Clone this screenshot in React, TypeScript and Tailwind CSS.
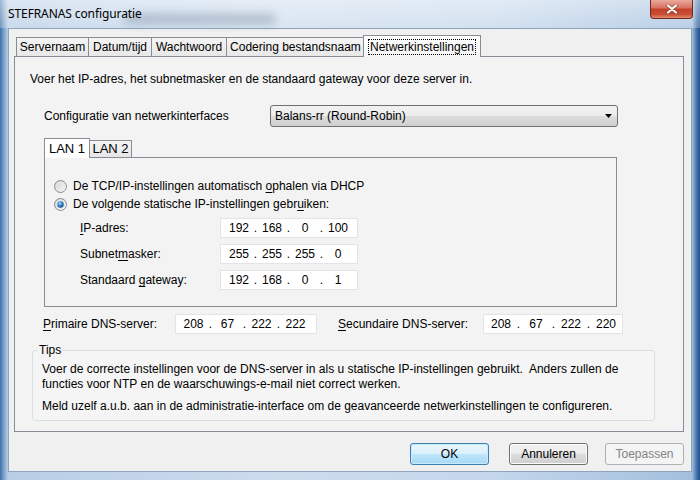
import React from 'react';

const U = ({ children }: { children: React.ReactNode }) => (
  <span className="underline underline-offset-[2px] decoration-[1px]">{children}</span>
);

function Radio({ checked }: { checked?: boolean }) {
  return (
    <svg width="13" height="13" viewBox="0 0 13 13" className="shrink-0">
      <defs>
        <linearGradient id="rbg" x1="0" y1="0" x2="1" y2="1">
          <stop offset="0" stopColor="#cfcfcf" />
          <stop offset="1" stopColor="#fbfbfb" />
        </linearGradient>
        <radialGradient id="rdot" cx="0.4" cy="0.35" r="0.75">
          <stop offset="0" stopColor="#b9e3fb" />
          <stop offset="0.45" stopColor="#3586cf" />
          <stop offset="1" stopColor="#0d3d78" />
        </radialGradient>
      </defs>
      <circle cx="6.5" cy="6.5" r="6" fill="url(#rbg)" stroke="#8d8d8d" />
      <circle cx="6.5" cy="6.5" r="4.2" fill="none" stroke="#e9e9e9" strokeWidth="1" />
      {checked && <circle cx="6.5" cy="6.5" r="3.2" fill="url(#rdot)" />}
    </svg>
  );
}

function IpBox({ parts, className, seg }: { parts: string[]; className: string; seg: string }) {
  return (
    <div className={`h-[20px] bg-white border border-[#e3e4e8] flex items-center ${className}`}>
      {parts.map((p, i) => (
        <React.Fragment key={i}>
          {i > 0 && <span className="w-[5px] text-center">.</span>}
          <span className={`${seg} text-center`}>{p}</span>
        </React.Fragment>
      ))}
    </div>
  );
}

const tabs = [
  { label: 'Servernaam', w: 'w-[73px]' },
  { label: 'Datum/tijd', w: 'w-[63px]' },
  { label: 'Wachtwoord', w: 'w-[75px]' },
  { label: 'Codering bestandsnaam', w: 'w-[138px]' },
];

export default function App() {
  return (
    <div className="w-[700px] h-[480px] overflow-hidden relative flex flex-col bg-[linear-gradient(90deg,#3f6fa6_0px,#6e97c4_3px,#b8cee6_8px,#cddced_40%,#c4d7eb_70%,#a3bfde_calc(100%_-_8px),#3c6da6_calc(100%_-_3px),#24508a_100%)] font-['Liberation_Sans',Arial,sans-serif] text-[12px] text-black">
      {/* title bar */}
      <div className="h-[28px] shrink-0 relative flex items-center pl-[8px] bg-[linear-gradient(180deg,rgba(255,255,255,0.5),rgba(255,255,255,0.25))]">
        <div className="absolute left-[125px] top-[14px] w-[150px] h-[10px] bg-[#6d7f94] opacity-40 blur-[5px]" />
        <span className="relative font-['Noto_Sans',sans-serif] text-[12px] leading-none tracking-[-0.1px] text-black">
          STEFRANAS configuratie
        </span>
        <div className="absolute right-[7px] top-0 w-[43px] h-[19px] rounded-b-[4px] border border-t-0 border-[#6e2b20] bg-[linear-gradient(180deg,#eaa99b,#d6705f_45%,#c2402b_50%,#c84e36_80%,#e28c6b)] flex items-center justify-center">
          <svg width="12" height="10" viewBox="0 0 12 10">
            <path d="M2 1.5 L10 8.5 M10 1.5 L2 8.5" stroke="#5a2018" strokeWidth="3.4" strokeLinecap="round" opacity="0.55" />
            <path d="M2 1.5 L10 8.5 M10 1.5 L2 8.5" stroke="#ffffff" strokeWidth="2.2" strokeLinecap="round" />
          </svg>
        </div>
      </div>

      {/* client area */}
      <div className="ml-[8px] mr-[8px] h-[444px] shrink-0 border border-[#8ea4bc] bg-[#f0f0f0] pl-[5px] pr-[7px] pt-[6px] flex flex-col">
        {/* tab strip */}
        <div className="h-[21px] flex items-end pl-[2px]">
          {tabs.map((t, i) => (
            <div
              key={t.label}
              className={`${t.w} h-[19px] border-t border-r border-[#898c95] ${i === 0 ? 'border-l' : ''} bg-[linear-gradient(180deg,#f4f4f4,#e8e8e8)] flex items-center justify-center`}
            >
              {t.label}
            </div>
          ))}
          <div className="w-[118px] h-[22px] -ml-[2px] mb-[-1px] relative z-10 border border-b-0 border-[#898c95] bg-[linear-gradient(180deg,#ffffff,#f5f5f5)] flex items-center justify-center">
            <span className="border border-dotted border-black px-[1px] leading-[14px]">Netwerkinstellingen</span>
          </div>
        </div>

        {/* tab panel */}
        <div className="h-[376px] border border-[#898c95] bg-[#f3f3f3] pl-[15px] pt-[15px] flex flex-col">
          <p className="leading-[15px]">
            Voer het IP-adres, het subnetmasker en de standaard gateway voor deze server in.
          </p>

          <div className="mt-[18px] ml-[14px] h-[22px] flex items-center">
            <span className="w-[226px]">Configuratie van netwerkinterfaces</span>
            <div className="w-[348px] h-[22px] rounded-[3px] border border-[#707070] bg-[linear-gradient(180deg,#f2f2f2,#ebebeb_50%,#dddddd_51%,#cfcfcf)] flex items-center pl-[4px] pr-[5px]">
              <span className="flex-1">Balans-rr (Round-Robin)</span>
              <svg width="7" height="4" viewBox="0 0 7 4">
                <polygon points="0,0 7,0 3.5,4" fill="#000" />
              </svg>
            </div>
          </div>

          {/* LAN tabs */}
          <div className="mt-[11px] ml-[14px] w-[573px] flex flex-col">
            <div className="h-[19px] flex items-end">
              <div className="w-[46px] h-[20px] mb-[-1px] relative z-10 border border-b-0 border-[#898c95] bg-white flex items-center justify-center text-[13px]">
                LAN 1
              </div>
              <div className="w-[42px] h-[17px] border-t border-r border-[#898c95] bg-[linear-gradient(180deg,#f4f4f4,#e6e6e6)] flex items-center justify-center text-[13px]">
                LAN 2
              </div>
            </div>
            <div className="h-[150px] border border-[#898c95] pl-[9px] pt-[20px] flex flex-col">
              <div className="h-[16px] flex items-center gap-[6px]">
                <Radio />
                <span>
                  De TCP/IP-instellingen automatisch <U>o</U>phalen via DHCP
                </span>
              </div>
              <div className="mt-[2px] h-[16px] flex items-center gap-[6px]">
                <Radio checked />
                <span>
                  De volgende statische IP-instellingen gebr<U>u</U>iken:
                </span>
              </div>
              <div className="mt-[6px] ml-[26px] flex items-center">
                <span className="w-[140px]">
                  <U>I</U>P-adres:
                </span>
                <IpBox parts={['192', '168', '0', '100']} className="w-[138px] pl-[4px]" seg="w-[28px]" />
              </div>
              <div className="mt-[6px] ml-[26px] flex items-center">
                <span className="w-[140px]">
                  Subnet<U>m</U>asker:
                </span>
                <IpBox parts={['255', '255', '255', '0']} className="w-[138px] pl-[4px]" seg="w-[28px]" />
              </div>
              <div className="mt-[6px] ml-[26px] flex items-center">
                <span className="w-[140px]">
                  Standaard <U>g</U>ateway:
                </span>
                <IpBox parts={['192', '168', '0', '1']} className="w-[138px] pl-[4px]" seg="w-[28px]" />
              </div>
            </div>
          </div>

          {/* DNS */}
          <div className="mt-[7px] ml-[13px] h-[20px] flex items-center">
            <span className="w-[132px]">
              <U>P</U>rimaire DNS-server:
            </span>
            <IpBox parts={['208', '67', '222', '222']} className="w-[142px] pl-[3px]" seg="w-[29px]" />
            <span className="ml-[21px] w-[145px]">
              <U>S</U>ecundaire DNS-server:
            </span>
            <IpBox parts={['208', '67', '222', '220']} className="w-[140px] pl-[2px]" seg="w-[30px]" />
          </div>

          {/* Tips */}
          <div className="mt-[16px] ml-[2px] w-[623px] h-[71px] relative border border-[#d5dfe5] rounded-[3px] bg-[#f5f5f5] pl-[9px] pt-[11px]">
            <span className="absolute left-[4px] top-[-8px] px-[2px] bg-[#f3f3f3] leading-[15px]">Tips</span>
            <p className="leading-[15px]">
              Voer de correcte instellingen voor de DNS-server in als u statische IP-instellingen gebruikt.&nbsp; Anders zullen de
              <br />
              functies voor NTP en de waarschuwings-e-mail niet correct werken.
            </p>
            <p className="mt-[7px] leading-[15px]">
              Meld uzelf a.u.b. aan in de administratie-interface om de geavanceerde netwerkinstellingen te configureren.
            </p>
          </div>
        </div>

        {/* buttons */}
        <div className="mt-[11px] h-[22px] flex justify-end">
          <button className="w-[79px] h-[22px] rounded-[3px] border border-[#3c7fb1] bg-[linear-gradient(180deg,#eaf6fd,#d9f0fc_50%,#bee6fd_51%,#a7d9f5)] shadow-[inset_0_0_0_1px_#c7ebfd]">
            OK
          </button>
          <button className="ml-[20px] w-[79px] h-[22px] rounded-[3px] border border-[#707070] bg-[linear-gradient(180deg,#f2f2f2,#ebebeb_50%,#dddddd_51%,#cfcfcf)] shadow-[inset_0_0_0_1px_#fcfcfc]">
            Annuleren
          </button>
          <button className="ml-[17px] w-[79px] h-[22px] rounded-[3px] border border-[#adb2b5] bg-[#f4f4f4] text-[#838383]">
            Toepassen
          </button>
        </div>
      </div>
    </div>
  );
}
